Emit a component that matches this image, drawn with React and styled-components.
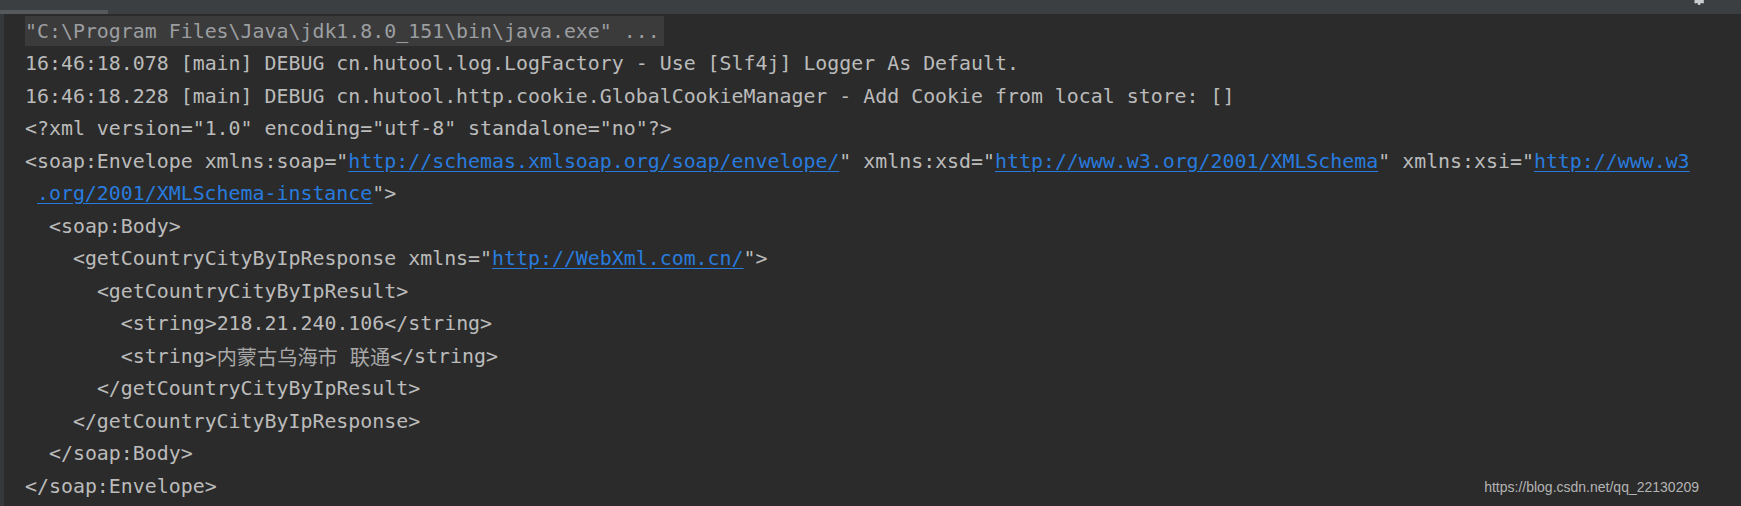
import React from 'react'
import styled, { createGlobalStyle } from 'styled-components'

const Global = createGlobalStyle`
  html, body { margin: 0; padding: 0; background: #2b2b2b; }
  body { width: 1741px; height: 506px; overflow: hidden; }
`

const LINK = '#287bde'

// each line: indent (spaces) + parts; a part is a string or { link: '...' }
const lines = [
  { cmd: true, parts: ['"C:\\Program Files\\Java\\jdk1.8.0_151\\bin\\java.exe" ...'] },
  { parts: ['16:46:18.078 [main] DEBUG cn.hutool.log.LogFactory - Use [Slf4j] Logger As Default.'] },
  { parts: ['16:46:18.228 [main] DEBUG cn.hutool.http.cookie.GlobalCookieManager - Add Cookie from local store: []'] },
  { parts: ['<?xml version="1.0" encoding="utf-8" standalone="no"?>'] },
  {
    parts: [
      '<soap:Envelope xmlns:soap="', { link: 'http://schemas.xmlsoap.org/soap/envelope/' },
      '" xmlns:xsd="', { link: 'http://www.w3.org/2001/XMLSchema' },
      '" xmlns:xsi="', { link: 'http://www.w3' },
    ],
  },
  { indent: 1, parts: [{ link: '.org/2001/XMLSchema-instance' }, '">'] },
  { indent: 2, parts: ['<soap:Body>'] },
  { indent: 4, parts: ['<getCountryCityByIpResponse xmlns="', { link: 'http://WebXml.com.cn/' }, '">'] },
  { indent: 6, parts: ['<getCountryCityByIpResult>'] },
  { indent: 8, parts: ['<string>218.21.240.106</string>'] },
  { indent: 8, parts: ['<string>', { cjk: '内蒙古乌海市' }, ' ', { cjk: '联通' }, '</string>'] },
  { indent: 6, parts: ['</getCountryCityByIpResult>'] },
  { indent: 4, parts: ['</getCountryCityByIpResponse>'] },
  { indent: 2, parts: ['</soap:Body>'] },
  { parts: ['</soap:Envelope>'] },
]

export default function App() {
  return (
    <>
      <Global />
      <Window>
        <TopBar>
          <TabMark />
          <Spacer />
          <Gear viewBox="0 0 16 16">
            <path d="M8 2.2l1.1.3.4 1.4 1.3.6 1.3-.7 1.1 1.1-.7 1.3.6 1.3 1.4.4v1.6l-1.4.4-.6 1.3.7 1.3-1.1 1.1-1.3-.7-1.3.6-.4 1.4H7.2l-.4-1.4-1.3-.6-1.3.7-1.1-1.1.7-1.3-.6-1.3-1.4-.4V7.2l1.4-.4.6-1.3-.7-1.3 1.1-1.1 1.3.7 1.3-.6.4-1.4z" fill="#c9cbcd" />
            <circle cx="8" cy="8" r="2" fill="#3c3f41" />
          </Gear>
        </TopBar>
        <Body>
          <Gutter />
          <Console>
            {lines.map((ln, i) => (
              <Line key={i} $indent={ln.indent || 0}>
                {ln.cmd ? (
                  <Command>{ln.parts[0]}</Command>
                ) : (
                  ln.parts.map((p, j) =>
                    typeof p === 'string' ? (
                      <span key={j}>{p}</span>
                    ) : p.link ? (
                      <Link key={j}>{p.link}</Link>
                    ) : (
                      <Cjk key={j}>{p.cjk}</Cjk>
                    )
                  )
                )}
              </Line>
            ))}
          </Console>
          <Watermark>https://blog.csdn.net/qq_22130209</Watermark>
        </Body>
      </Window>
    </>
  )
}

const Window = styled.div`
  width: 1741px;
  height: 506px;
  display: flex;
  flex-direction: column;
  background: #2b2b2b;
  overflow: hidden;
`

const TopBar = styled.div`
  height: 14px;
  flex: none;
  display: flex;
  align-items: flex-start;
  background: #3c3f41;
  overflow: hidden;
`

const TabMark = styled.div`
  width: 108px;
  height: 4px;
  margin-top: 10px;
  background: #56595c;
`

const Spacer = styled.div`
  flex: 1;
`

const Gear = styled.svg`
  width: 16px;
  height: 16px;
  margin-top: -10px;
  margin-right: 34px;
`

const Body = styled.div`
  position: relative;
  flex: 1;
  display: flex;
`

const Gutter = styled.div`
  width: 4px;
  flex: none;
  background: #36393b;
`

const Console = styled.div`
  flex: 1;
  padding: 1px 0 0 21px;
  font-family: 'DejaVu Sans Mono', 'Liberation Mono', monospace;
  font-size: 19.9px;
  color: #bbbbbb;
`

const Line = styled.div`
  height: 32.5px;
  display: flex;
  align-items: center;
  white-space: pre;
  padding-left: ${p => p.$indent * 11.98}px;
`

const Command = styled.span`
  display: inline-flex;
  align-items: center;
  height: 30px;
  padding-right: 4px;
  background: #3b3b3b;
  color: #9b9ea1;
`

const Link = styled.span`
  color: ${LINK};
  text-decoration: underline;
  text-underline-offset: 3px;
`

const Cjk = styled.span`
  font-family: 'Noto Sans CJK SC', sans-serif;
  font-size: 20.2px;
  color: #a8a8a8;
`

const Watermark = styled.div`
  position: absolute;
  right: 42px;
  bottom: 11px;
  font-family: 'Liberation Sans', Arial, sans-serif;
  font-size: 14px;
  color: #b4b4b4;
`
